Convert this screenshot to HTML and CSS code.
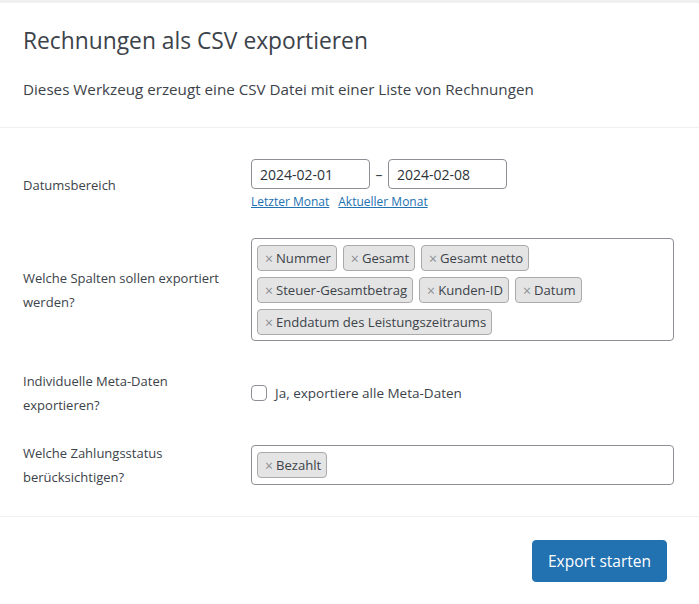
FILE: index.html
```html
<!DOCTYPE html>
<html lang="de">
<head>
<meta charset="utf-8">
<title>Rechnungen als CSV exportieren</title>
<link rel="stylesheet" href="styles.css">
</head>
<body>
<div class="page">
  <header class="head">
    <h1 class="title">Rechnungen als CSV exportieren</h1>
    <p class="intro">Dieses Werkzeug erzeugt eine CSV Datei mit einer Liste von Rechnungen</p>
  </header>
  <section class="form">
    <div class="row">
      <div class="label">Datumsbereich</div>
      <div class="field">
        <div class="dates">
          <input class="date" type="text" value="2024-02-01">
          <span class="dash">–</span>
          <input class="date" type="text" value="2024-02-08">
        </div>
        <div class="links">
          <a href="#" class="link">Letzter Monat</a>
          <a href="#" class="link">Aktueller Monat</a>
        </div>
      </div>
    </div>
    <div class="row">
      <div class="label">Welche Spalten sollen exportiert werden?</div>
      <div class="field">
        <ul class="tags">
          <li class="tag"><span class="x">×</span>Nummer</li>
          <li class="tag"><span class="x">×</span>Gesamt</li>
          <li class="tag"><span class="x">×</span>Gesamt netto</li>
          <li class="tag"><span class="x">×</span>Steuer-Gesamtbetrag</li>
          <li class="tag"><span class="x">×</span>Kunden-ID</li>
          <li class="tag"><span class="x">×</span>Datum</li>
          <li class="tag"><span class="x">×</span>Enddatum des Leistungszeitraums</li>
        </ul>
      </div>
    </div>
    <div class="row">
      <div class="label">Individuelle Meta-Daten exportieren?</div>
      <div class="field">
        <label class="check"><span class="box"></span>Ja, exportiere alle Meta-Daten</label>
      </div>
    </div>
    <div class="row row-last">
      <div class="label">Welche Zahlungsstatus berücksichtigen?</div>
      <div class="field">
        <ul class="tags">
          <li class="tag"><span class="x">×</span>Bezahlt</li>
        </ul>
      </div>
    </div>
  </section>
  <footer class="foot">
    <button class="btn" type="button">Export starten</button>
  </footer>
</div>
</body>
</html>
```
FILE: styles.css
```css
* { box-sizing: border-box; }
html, body { margin: 0; padding: 0; background: #fff; }
body {
  font-family: "Open Sans", "Noto Sans", sans-serif;
  color: #3c434a;
  border-top: 3px solid #f0f0f1;
}
.head {
  padding: 22px 23px 0 23px;
  border-bottom: 1px solid #f0f0f1;
  height: 125px;
}
.title {
  margin: 0;
  font-size: 22.8px;
  font-weight: 400;
  line-height: 32px;
  color: #3c434a;
}
.intro {
  margin: 21px 0 0 0;
  font-size: 15.2px;
  line-height: 22px;
}
.form {
  padding: 17px 25px 13px 23px;
  border-bottom: 1px solid #f0f0f1;
}
.row {
  display: grid;
  grid-template-columns: 228px 1fr;
  align-items: center;
  padding: 14px 0;
}
.row-last { padding-top: 10px; }
.label {
  font-size: 13px;
  line-height: 24px;
  padding-right: 30px;
}
.dates {
  display: flex;
  align-items: center;
}
.date {
  width: 119px;
  height: 30px;
  border: 1px solid #8c8f94;
  border-radius: 4px;
  padding: 0 8px;
  font-family: inherit;
  font-size: 14px;
  color: #2c3338;
  background: #fff;
}
.dash {
  width: 18px;
  text-align: center;
  font-size: 14px;
}
.links {
  display: flex;
  gap: 9px;
  margin-top: 4px;
}
.link {
  color: #2271b1;
  font-size: 12px;
  line-height: 17px;
  text-decoration: underline;
}
.tags {
  list-style: none;
  margin: 0;
  padding: 0 5px 5px 5px;
  border: 1px solid #8c8f94;
  border-radius: 4px;
  display: flex;
  flex-wrap: wrap;
  gap: 0 6px;
  min-height: 40px;
}
.tag {
  margin-top: 6px;
  height: 26px;
  background: #e4e4e4;
  border: 1px solid #aaa;
  border-radius: 4px;
  padding: 0 5px 0 7px;
  display: flex;
  align-items: center;
  font-size: 13.1px;
  color: #3c434a;
}
.x {
  color: #8c8f94;
  font-size: 14px;
  margin-right: 3px;
}
.check {
  display: flex;
  align-items: center;
  font-size: 13.5px;
}
.box {
  width: 16px;
  height: 16px;
  border: 1px solid #8c8f94;
  border-radius: 4px;
  margin-right: 8px;
  background: #fff;
}
.foot {
  display: flex;
  justify-content: flex-end;
  padding: 23px 32px 0 0;
}
.btn {
  width: 135px;
  height: 42px;
  background: #2271b1;
  border: 1px solid #2271b1;
  border-radius: 4px;
  color: #fff;
  font-family: inherit;
  font-size: 15.5px;
  cursor: pointer;
}
```
